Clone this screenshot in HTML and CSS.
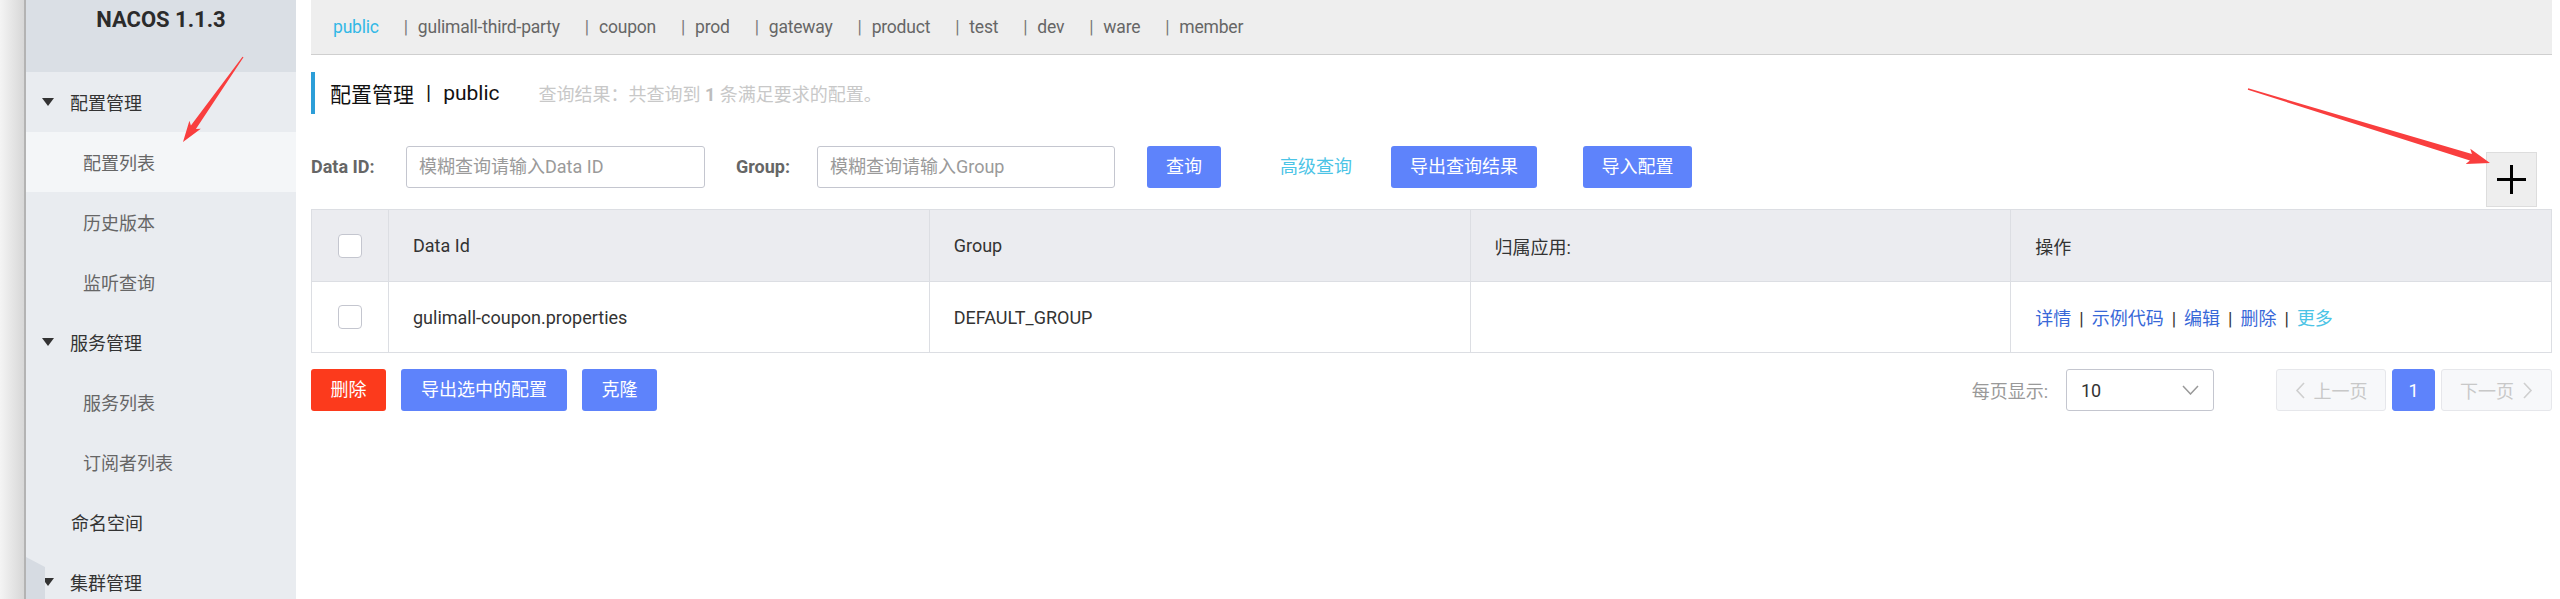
FILE: index.html
```html
<!DOCTYPE html>
<html lang="zh-CN">
<head>
<meta charset="utf-8">
<title>Nacos 配置管理</title>
<link rel="stylesheet" href="styles.css">
</head>
<body>
<div class="app">
  <div class="strip"></div>
  <aside class="sidebar">
    <div class="brand">NACOS 1.1.3</div>
    <ul class="menu">
      <li class="group"><span class="caret"></span>配置管理</li>
      <li class="sub active">配置列表</li>
      <li class="sub">历史版本</li>
      <li class="sub">监听查询</li>
      <li class="group"><span class="caret"></span>服务管理</li>
      <li class="sub">服务列表</li>
      <li class="sub">订阅者列表</li>
      <li class="top">命名空间</li>
      <li class="group"><span class="caret"></span>集群管理</li>
    </ul>
    <div class="fold"></div>
  </aside>
  <main class="main">
    <nav class="ns-bar">
      <span class="ns active">public</span>
      <span class="ns"><i class="sep">|</i>gulimall-third-party</span>
      <span class="ns"><i class="sep">|</i>coupon</span>
      <span class="ns"><i class="sep">|</i>prod</span>
      <span class="ns"><i class="sep">|</i>gateway</span>
      <span class="ns"><i class="sep">|</i>product</span>
      <span class="ns"><i class="sep">|</i>test</span>
      <span class="ns"><i class="sep">|</i>dev</span>
      <span class="ns"><i class="sep">|</i>ware</span>
      <span class="ns"><i class="sep">|</i>member</span>
    </nav>

    <div class="crumb">
      <span class="crumb-title">配置管理</span>
      <span class="crumb-sep">|</span>
      <span class="crumb-ns">public</span>
      <span class="crumb-info">查询结果：共查询到 <b>1</b> 条满足要求的配置。</span>
    </div>

    <div class="search">
      <span class="label label-id">Data ID:</span>
      <div class="input input-id">模糊查询请输入Data ID</div>
      <span class="label label-group">Group:</span>
      <div class="input input-group">模糊查询请输入Group</div>
      <span class="btn btn-query">查询</span>
      <span class="adv">高级查询</span>
      <span class="btn btn-export">导出查询结果</span>
      <span class="btn btn-import">导入配置</span>
      <span class="add">
        <svg width="31" height="31" viewBox="0 0 31 31"><path d="M15.5 1v29M1 15.5h29" stroke="#000" stroke-width="3" fill="none"/></svg>
      </span>
    </div>

    <table class="table">
      <colgroup>
        <col class="col-check"><col><col><col><col>
      </colgroup>
      <thead>
        <tr>
          <th class="cb-cell"><span class="cb"></span></th>
          <th>Data Id</th>
          <th>Group</th>
          <th>归属应用:</th>
          <th>操作</th>
        </tr>
      </thead>
      <tbody>
        <tr>
          <td class="cb-cell"><span class="cb"></span></td>
          <td>gulimall-coupon.properties</td>
          <td>DEFAULT_GROUP</td>
          <td></td>
          <td class="ops"><a class="op">详情</a><span class="op-sep">|</span><a class="op">示例代码</a><span class="op-sep">|</span><a class="op">编辑</a><span class="op-sep">|</span><a class="op">删除</a><span class="op-sep">|</span><a class="op more">更多</a></td>
        </tr>
      </tbody>
    </table>

    <div class="footer">
      <span class="fbtn del">删除</span>
      <span class="fbtn exp">导出选中的配置</span>
      <span class="fbtn clone">克隆</span>
      <span class="pagesize">每页显示:</span>
      <div class="select">
        <span>10</span>
        <svg width="17" height="10" viewBox="0 0 17 10"><path d="M1 1l7.5 8L16 1" stroke="#999" stroke-width="1.5" fill="none"/></svg>
      </div>
      <div class="pager">
        <span class="pg prev"><svg width="10" height="17" viewBox="0 0 10 17"><path d="M9 1L2 8.5 9 16" stroke="#cfcfcf" stroke-width="1.6" fill="none"/></svg>上一页</span>
        <span class="pg cur">1</span>
        <span class="pg next">下一页<svg width="10" height="17" viewBox="0 0 10 17"><path d="M1 1l7 7.5L1 16" stroke="#cfcfcf" stroke-width="1.6" fill="none"/></svg></span>
      </div>
    </div>
  </main>
</div>

<svg class="annot" width="2560" height="599" viewBox="0 0 2560 599">
  <polygon fill="#f93e3e" points="243.5,57.3 195.9,129.1 200.8,128.8 183,142 189.4,120.8 190.9,125.5 242.5,56.7"/>
  <polygon fill="#f93e3e" points="2247.8,89.7 2469.9,160.5 2465.7,163.9 2490,163 2470.3,148.7 2471.9,153.9 2248.2,88.3"/>
</svg>
</body>
</html>
```

FILE: styles.css
```css
* { box-sizing: border-box; margin: 0; padding: 0; }

html, body {
  width: 2560px;
  height: 599px;
  overflow: hidden;
  background: #fff;
}

body {
  position: relative;
  font-family: Roboto, "Noto Sans CJK SC", "Noto Sans", sans-serif;
  font-size: 18px;
  color: #333;
}

.app {
  display: flex;
  height: 599px;
}

/* left window edge */
.strip {
  width: 26px;
  flex: none;
  background: linear-gradient(to right, #f4f4f4, #d7d7d7);
  border-right: 2px solid #b3b3b3;
}

/* sidebar */
.sidebar {
  width: 270px;
  flex: none;
  background: #e9ecf0;
  position: relative;
  overflow: hidden;
}

.brand {
  height: 72px;
  background: #dadfe5;
  text-align: center;
  font-weight: 700;
  font-size: 22px;
  line-height: 28px;
  padding-top: 6px;
  color: #2b2b2b;
}

.menu { list-style: none; }

.menu li {
  height: 60px;
  display: flex;
  align-items: center;
  font-size: 18px;
  white-space: nowrap;
}

.group { padding-left: 16px; color: #333; }

.caret {
  width: 0;
  height: 0;
  border-left: 6.5px solid transparent;
  border-right: 6.5px solid transparent;
  border-top: 8px solid #333;
  margin-right: 16px;
}

.sub { padding-left: 57px; color: #666; }
.sub.active { background: #f4f6f8; }
.top { padding-left: 45px; color: #333; }

.fold {
  position: absolute;
  left: 0;
  bottom: 0;
  width: 19px;
  height: 42px;
  background: #d6dbe2;
  clip-path: polygon(0 0, 100% 24%, 100% 100%, 0 100%);
}

/* main column */
.main {
  flex: 1;
  min-width: 0;
  padding: 0 8px 0 15px;
}

.ns-bar {
  height: 55px;
  background: #eee;
  border-bottom: 1px solid #cfcfcf;
  display: flex;
  align-items: center;
  padding-left: 22px;
  font-size: 17.5px;
  letter-spacing: -0.2px;
  color: #666;
  white-space: nowrap;
}

.ns { margin-right: 25px; }
.ns.active { color: #33b8e6; }
.sep { font-style: normal; color: #7a7a7a; margin-right: 10px; }

.crumb {
  margin-top: 17px;
  height: 42px;
  border-left: 4px solid #2c9ed8;
  padding-left: 15px;
  display: flex;
  align-items: center;
  white-space: nowrap;
  color: #111;
}

.crumb-title, .crumb-ns, .crumb-sep { font-size: 21px; }
.crumb-sep { margin: 0 12px; }
.crumb-info { font-size: 18px; color: #c8c8c8; margin-left: 39px; }
.crumb-info b { color: #bdbdbd; }

/* search row */
.search {
  margin-top: 32px;
  display: flex;
  align-items: flex-start;
  white-space: nowrap;
}

.label {
  font-weight: 700;
  color: #666;
  line-height: 42px;
  font-size: 18px;
}

.label-id { width: 95px; }
.label-group { width: 81px; margin-left: 31px; }

.input {
  height: 42px;
  border: 1px solid #c4c6cf;
  border-radius: 3px;
  padding-left: 12px;
  line-height: 40px;
  color: #9a9a9a;
  font-size: 18px;
}

.input-id { width: 299px; }
.input-group { width: 298px; }

.btn {
  height: 42px;
  line-height: 42px;
  border-radius: 3px;
  background: #5e83fb;
  color: #fff;
  font-size: 18px;
  text-align: center;
}

.btn-query { width: 74px; margin-left: 32px; }
.adv { margin-left: 59px; width: 72px; line-height: 42px; color: #4cc4e6; }
.btn-export { width: 146px; margin-left: 39px; }
.btn-import { width: 109px; margin-left: 46px; }

.add {
  margin-left: auto;
  margin-top: 6px;
  margin-right: 15px;
  width: 51px;
  height: 55px;
  background: #eee;
  border: 1px solid #ddd;
  display: flex;
  align-items: center;
  justify-content: center;
}

/* table */
.table {
  margin-top: 2px;
  width: 100%;
  border-collapse: collapse;
  table-layout: fixed;
  font-size: 18px;
  color: #333;
}

.col-check { width: 77px; }

.table th, .table td {
  border: 1px solid #dcdee3;
  text-align: left;
  font-weight: 400;
  padding: 0 0 0 24px;
  white-space: nowrap;
}

.table th { background: #ebecf0; height: 72px; }
.table td { height: 71px; }

.table .cb-cell { padding: 0; text-align: center; }

.cb {
  display: inline-block;
  width: 24px;
  height: 24px;
  border: 1px solid #c4c6cf;
  border-radius: 4px;
  background: #fff;
  vertical-align: middle;
}

.op { color: #3868d8; }
.op.more { color: #4cc4e6; }
.op-sep { color: #333; margin: 0 8px; }

/* footer */
.footer {
  margin-top: 16px;
  display: flex;
  align-items: center;
  white-space: nowrap;
}

.fbtn {
  height: 42px;
  line-height: 42px;
  border-radius: 3px;
  color: #fff;
  text-align: center;
  margin-right: 15px;
  background: #5e83fb;
}

.del { width: 75px; background: #fc3a1c; }
.exp { width: 166px; }
.clone { width: 75px; margin-right: 0; }

.pagesize { margin-left: auto; color: #999; }

.select {
  margin-left: 18px;
  width: 148px;
  height: 42px;
  border: 1px solid #c4c6cf;
  border-radius: 3px;
  display: flex;
  align-items: center;
  justify-content: space-between;
  padding: 0 14px 0 14px;
  color: #333;
}

.pager {
  margin-left: 62px;
  display: flex;
  gap: 6px;
}

.pg {
  height: 42px;
  border: 1px solid #e6e7eb;
  background: #f7f8fa;
  border-radius: 3px;
  color: #c8c8c8;
  display: flex;
  align-items: center;
  justify-content: center;
  gap: 9px;
}

.pg.prev { width: 110px; }
.pg.next { width: 111px; }
.pg.cur { width: 43px; background: #5e83fb; border-color: #5e83fb; color: #fff; }

/* annotation arrows drawn over the screenshot */
.annot {
  position: absolute;
  left: 0;
  top: 0;
  pointer-events: none;
}
```
